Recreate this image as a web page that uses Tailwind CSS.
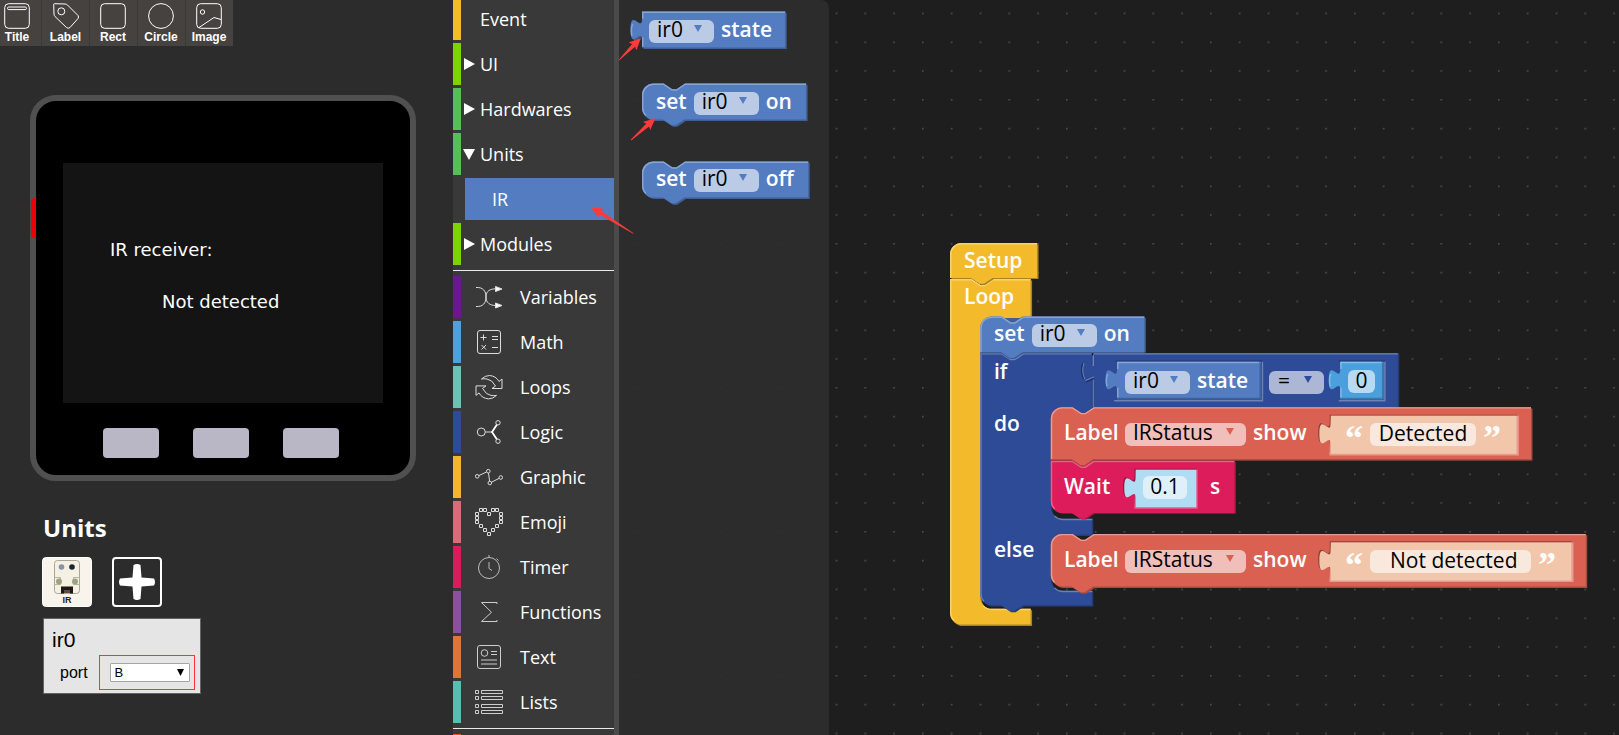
<!DOCTYPE html>
<html lang="en">
<head>
<meta charset="utf-8">
<title>UIFlow</title>
<script src="https://cdn.jsdelivr.net/npm/@tailwindcss/browser@4"></script>
</head>
<body class="relative flex h-screen overflow-hidden bg-[#2c2c2c] font-['Open_Sans',sans-serif] text-white">

<!-- Simulator panel -->
<aside class="w-[453px] shrink-0">
  <div class="flex w-[233px] bg-[#454240] font-['Liberation_Sans',sans-serif] text-xs font-bold leading-4">
    <button class="flex h-[46px] w-[42px] flex-col items-center border-r border-[#3c3a38] pt-[3px] pr-[7px]">
      <svg class="h-[26px] w-[26px]" viewBox="0 0 26 26" fill="none" stroke="#fff"><rect x=".7" y=".7" width="24.6" height="24.6" rx="4"/><rect x="3.5" y="4" width="19" height="2.6" rx="1.3"/></svg>Title</button>
    <button class="flex h-[46px] w-12 flex-col items-center border-r border-[#3c3a38] pt-[3px]">
      <svg class="h-[26px] w-[26px]" viewBox="0 0 26 26" fill="none" stroke="#fff"><path d="M.7 1.5Q.7.7 1.500.7L12 1Q13.500 1 14.500 2L25 12.500Q26 14 25 15.500L17 24.500Q15 26 13.500 24.500L2 13.500Q1 12.500 1 11Z"/><circle cx="8.300" cy="8.300" r="3.500"/></svg>Label</button>
    <button class="flex h-[46px] w-12 flex-col items-center border-r border-[#3c3a38] pt-[3px] pr-px">
      <svg class="h-[26px] w-[26px]" viewBox="0 0 26 26" fill="none" stroke="#fff"><rect x=".7" y=".7" width="24.6" height="24.6" rx="4"/></svg>Rect</button>
    <button class="flex h-[46px] w-12 flex-col items-center border-r border-[#3c3a38] pt-[3px] pr-px">
      <svg class="h-[26px] w-[26px]" viewBox="0 0 26 26" fill="none" stroke="#fff"><circle cx="13" cy="13" r="12.400"/></svg>Circle</button>
    <button class="flex h-[46px] w-[47px] flex-col items-center pt-[3px] pr-px">
      <svg class="h-[26px] w-[26px]" viewBox="0 0 26 26" fill="none" stroke="#fff"><rect x=".7" y=".7" width="24.6" height="24.6" rx="4"/><circle cx="6.500" cy="9" r="2.200"/><path d="M3 24.500L18 14.500L25 16.500"/></svg>Image</button>
  </div>

  <div class="relative mt-[49px] ml-[30px] flex w-[386px] flex-col items-center rounded-[26px] border-[6px] border-[#505050] bg-black pt-[62px] pb-[17px]">
    <div class="absolute top-[97px] -left-[5px] h-10 w-[5px] rounded-l-sm bg-[#ee0008]"></div>
    <div class="h-60 w-80 bg-[#141414] pt-[75px] pl-[47px] font-['DejaVu_Sans',sans-serif] text-lg leading-6">
      <p>IR receiver:</p>
      <p class="mt-7 pl-[52px]">Not detected</p>
    </div>
    <div class="mt-[25px] mr-1 flex gap-[34px]">
      <button aria-label="Button A" class="h-[30px] w-14 rounded bg-[#b9b7c5]"></button>
      <button aria-label="Button B" class="h-[30px] w-14 rounded bg-[#b9b7c5]"></button>
      <button aria-label="Button C" class="h-[30px] w-14 rounded bg-[#b9b7c5]"></button>
    </div>
  </div>

  <h2 class="mt-[31px] ml-[43px] text-2xl leading-8 font-bold">Units</h2>
  <div class="mt-[13px] ml-[42px] flex gap-5">
    <button aria-label="IR unit" class="h-[50px] w-[50px] overflow-hidden rounded">
      <svg viewBox="0 0 50 50"><rect width="50" height="50" rx="4" fill="#fff"/><rect x="1" y="1" width="48" height="48" rx="3" fill="#f8f4ec"/><rect x="12.500" y="3.500" width="25" height="33" rx="3" fill="#f4f0e4" stroke="#aaa69a"/><circle cx="19.500" cy="10" r="2.800" fill="#8496a3"/><circle cx="30" cy="10" r="2.800" fill="#1b2430"/><path d="M12.500 20.500h6v7h-6M37.500 20.500h-6v7h6" fill="none" stroke="#b9b5a5"/><circle cx="17" cy="24.500" r="3" fill="#9ba380"/><circle cx="33" cy="24.500" r="3" fill="#9ba380"/><path d="M19 29.500h12v7h-3v-2h-6v2h-3z" fill="#1f1715"/><rect x="22" y="33" width="6" height="3" fill="#5a4c46"/><text x="25" y="46" text-anchor="middle" font-family="Liberation Sans" font-weight="700" font-size="9" fill="#2a2321">IR</text></svg>
    </button>
    <button aria-label="Add unit" class="flex h-[50px] w-[50px] items-center justify-center rounded border-2 border-white">
      <svg class="h-9 w-9" viewBox="0 0 36 36" fill="#fff"><path d="M14.500 1Q18-1 21.500 1L22.500 13.500L35 14.500Q37 18 35 21.500L22.500 22.500L21.500 35Q18 37 14.500 35L13.500 22.500L1 21.500Q-1 18 1 14.500L13.500 13.500Z"/></svg>
    </button>
  </div>
  <div class="mt-[11px] ml-[43px] w-[158px] border border-[#636363] bg-[#e5e5e5] pt-[9px] pb-[3px] font-['Liberation_Sans',sans-serif] text-black">
    <h3 class="pl-2 text-[21px] leading-6">ir0</h3>
    <div class="mt-[3px] flex items-center pl-4">
      <label for="port" class="text-base leading-6">port</label>
      <div class="ml-[11px] border border-[#ff3333] py-[7px] pr-1 pl-[10px]">
        <div class="relative">
          <select id="port" class="block h-[19px] w-20 appearance-none rounded-[1px] border border-[#a5a5a5] bg-white pl-1 text-[13px] leading-4"><option>B</option></select>
          <svg class="pointer-events-none absolute top-[6px] right-[6px] h-[7px] w-[7px]" viewBox="0 0 7 7"><path d="M0 0h7L3.500 7z"/></svg>
        </div>
      </div>
    </div>
  </div>
</aside>

<!-- Block categories -->
<nav class="w-[166px] shrink-0 overflow-hidden border-r-[5px] border-[#4a4a4a] bg-[#393939] text-lg">
  <div class="-mt-0.5 flex flex-col gap-[3px]">
    <button class="flex h-[42px] items-center border-l-8 border-[#f4bb2d] pl-[19px]">Event</button>
    <button class="flex h-[42px] items-center gap-[5px] border-l-8 border-[#7ed300] pl-[3px]"><svg class="h-3 w-[11px]" viewBox="0 0 11 12" fill="#fff"><path d="M0 0L11 6L0 12z"/></svg>UI</button>
    <button class="flex h-[42px] items-center gap-[5px] border-l-8 border-[#55c05a] pl-[3px]"><svg class="h-3 w-[11px]" viewBox="0 0 11 12" fill="#fff"><path d="M0 0L11 6L0 12z"/></svg>Hardwares</button>
    <button class="flex h-[42px] items-center gap-[5px] border-l-8 border-[#55c05a] pl-0.5"><svg class="h-[11px] w-3" viewBox="0 0 12 11" fill="#fff"><path d="M0 0H12L6 11z"/></svg>Units</button>
    <button class="ml-3 flex h-[42px] items-center bg-[#547dc1] pl-[27px]">IR</button>
    <button class="flex h-[42px] items-center gap-[5px] border-l-8 border-[#7ed300] pl-[3px]"><svg class="h-3 w-[11px]" viewBox="0 0 11 12" fill="#fff"><path d="M0 0L11 6L0 12z"/></svg>Modules</button>
  </div>
  <hr class="mt-[5px] mb-[5px] border-white/90">
  <div class="flex flex-col gap-[3px]">
    <button class="flex h-[42px] items-center gap-[17px] border-l-8 border-[#6a1790] pl-[14px]">
      <svg class="h-7 w-7" viewBox="0 0 28 28" fill="none" stroke="#ddd"><path d="M1 4.500C8 4 11 8 11 14S15 22.500 21 22.500M1 23.500C8 24 11 20 11 14S15 5.800 21 5.800"/><path d="M20.500 3.500L27 6L20.500 8.500zM20.500 20L27 22.500L20.500 25z" fill="#fff"/></svg>Variables</button>
    <button class="flex h-[42px] items-center gap-[17px] border-l-8 border-[#4ea0de] pl-[14px]">
      <svg class="h-7 w-7" viewBox="0 0 28 28" fill="none" stroke="#ddd"><rect x="2.500" y="2.500" width="23" height="23" rx="2.500"/><path d="M5.500 9.500h6M8.500 6.500v6M17 8.500h6M17 11.500h6M6.500 17l4.500 4.500M11 17l-4.500 4.500M17 19.500h6"/></svg>Math</button>
    <button class="flex h-[42px] items-center gap-[17px] border-l-8 border-[#6ac3b4] pl-[14px]">
      <svg class="h-7 w-7" viewBox="0 0 28 28" fill="none" stroke="#ddd"><path d="M6.500 6Q10 2.500 14.500 2.500Q21 3 24 8.500L27 6V15.500H17L20.500 13Q17 6.500 12 6Q9 5.500 6.500 6z"/><path transform="rotate(180 14 14.200)" d="M6.500 6Q10 2.500 14.500 2.500Q21 3 24 8.500L27 6V15.500H17L20.500 13Q17 6.500 12 6Q9 5.500 6.500 6z"/></svg>Loops</button>
    <button class="flex h-[42px] items-center gap-[17px] border-l-8 border-[#2d4b96] pl-[14px]">
      <svg class="h-7 w-7" viewBox="0 0 28 28" fill="none" stroke="#ddd"><circle cx="6.300" cy="14" r="4"/><path d="M10.500 14H17"/><path d="M22 6.500L17 14L22 21.500" stroke="#fff" stroke-width="1.800"/><circle cx="23" cy="4.800" r="2.200"/><circle cx="23" cy="23.200" r="2.200"/></svg>Logic</button>
    <button class="flex h-[42px] items-center gap-[17px] border-l-8 border-[#f5b432] pl-[14px]">
      <svg class="h-7 w-7" viewBox="0 0 28 28" fill="none" stroke="#ddd"><circle cx="2.200" cy="13.300" r="1.800"/><circle cx="13.300" cy="8.200" r="1.800"/><circle cx="14.800" cy="20" r="1.800"/><circle cx="25.800" cy="14.500" r="1.800"/><path d="M4 12.500L11.500 9M13.500 10L14.600 18.200M16.500 19.200L24 15.400"/></svg>Graphic</button>
    <button class="flex h-[42px] items-center gap-[17px] border-l-8 border-[#dd6a7a] pl-[14px]">
      <svg class="h-7 w-7" viewBox="0 0 28 28" fill="none" stroke="#ddd"><path d="M4.500.500h3v3h-3zM8.500.500h3v3h-3zM16.500.500h3v3h-3zM20.500.500h3v3h-3zM12.500 4.500h3v3h-3zM.500 4.500h3v3h-3zM.500 8.500h3v3h-3zM.500 12.500h3v3h-3zM24.500 4.500h3v3h-3zM24.500 8.500h3v3h-3zM24.500 12.500h3v3h-3zM4.500 16.500h3v3h-3zM8.500 20.500h3v3h-3zM12.500 24.500h3v3h-3zM20.500 16.500h3v3h-3zM16.500 20.500h3v3h-3z"/></svg>Emoji</button>
    <button class="flex h-[42px] items-center gap-[17px] border-l-8 border-[#db1c5c] pl-[14px]">
      <svg class="h-7 w-7" viewBox="0 0 28 28" fill="none" stroke="#bbb"><circle cx="14" cy="15" r="10.500"/><path d="M14 2v2.500M21.500 5.500l2 2M14 9v6.500l3 2"/></svg>Timer</button>
    <button class="flex h-[42px] items-center gap-[17px] border-l-8 border-[#8c50a0] pl-[14px]">
      <svg class="h-7 w-7" viewBox="0 0 28 28" fill="none" stroke="#ccc"><path d="M22 6V4.500H6.500L16.500 14.300L6.500 23.500H22V22"/></svg>Functions</button>
    <button class="flex h-[42px] items-center gap-[17px] border-l-8 border-[#e07538] pl-[14px]">
      <svg class="h-7 w-7" viewBox="0 0 28 28" fill="none" stroke="#ccc"><rect x="2.500" y="2.500" width="23" height="23" rx="2.500"/><circle cx="9.500" cy="10" r="3.300"/><path d="M16 8.500h6M16 11.500h6M6 17h16M6 21h16"/></svg>Text</button>
    <button class="flex h-[42px] items-center gap-[17px] border-l-8 border-[#55bfb0] pl-[14px]">
      <svg class="h-7 w-7" viewBox="0 0 28 28" fill="none" stroke="#ccc"><path d="M.500 2.500h3v3h-3zM6.500 2.500h21v3h-21zM.500 8.500h3v3h-3zM6.500 8.500h21v3h-21zM.500 16.500h3v3h-3zM6.500 16.500h21v3h-21zM.500 22.500h3v3h-3zM6.500 22.500h21v3h-21z"/></svg>Lists</button>
  </div>
  <hr class="mt-[5px] mb-[5px] border-white/90">
  <div class="h-[42px] border-l-8 border-[#f0501e]"></div>
</nav>

<!-- Workspace canvas -->
<main class="relative min-w-0 flex-1 overflow-hidden bg-[#1e1e1e] text-[21px] leading-6 font-semibold">
  <svg class="absolute inset-0 h-full w-full">
    <defs><pattern id="dots" x="15" y="12.600" width="28.800" height="28.800" patternUnits="userSpaceOnUse"><rect width="1.600" height="1.600" fill="#505050"/></pattern></defs>
    <rect width="100%" height="100%" fill="url(#dots)"/>
  </svg>

  <!-- Flyout -->
  <section class="absolute inset-y-0 left-0 w-[210px] rounded-tr-lg bg-[#2d2d2d]/90">
    <svg class="absolute inset-0 h-full w-full">
      <g transform="translate(23 11.500) scale(1.44)">
        <path transform="translate(1 1)" fill="#3f5f96" d="M0 0H99.500V25H0V20C0 10-8 28-8 12.500S0 15 0 5z"/>
        <path fill="#547dc1" d="M0 0H99.500V25H0V20C0 10-8 28-8 12.500S0 15 0 5z"/>
        <path fill="none" stroke="#87a4d4" d="M99.500 .500H.500V5M.500 18V24.500M-7 17Q-8 12-6.500 8.500"/>
      </g>
      <g transform="translate(23 83.500) scale(1.44)">
        <path transform="translate(1 1)" fill="#3f5f96" d="M0 8A8 8 0 0 1 8 0H15l6 4h3l6-4H114V25H29.500l-6 4h-3l-6-4H8A8 8 0 0 1 0 17z"/>
        <path fill="#547dc1" d="M0 8A8 8 0 0 1 8 0H15l6 4h3l6-4H114V25H29.500l-6 4h-3l-6-4H8A8 8 0 0 1 0 17z"/>
        <path fill="none" stroke="#87a4d4" d="M2.700 22.300A7.500 7.500 0 0 1 .500 17V8A7.500 7.500 0 0 1 8 .500H15l6 4h3l6-4H114"/>
      </g>
      <g transform="translate(23 161.500) scale(1.44)">
        <path transform="translate(1 1)" fill="#3f5f96" d="M0 8A8 8 0 0 1 8 0H15l6 4h3l6-4H115.500V25H29.500l-6 4h-3l-6-4H8A8 8 0 0 1 0 17z"/>
        <path fill="#547dc1" d="M0 8A8 8 0 0 1 8 0H15l6 4h3l6-4H115.500V25H29.500l-6 4h-3l-6-4H8A8 8 0 0 1 0 17z"/>
        <path fill="none" stroke="#87a4d4" d="M2.700 22.300A7.500 7.500 0 0 1 .500 17V8A7.500 7.500 0 0 1 8 .500H15l6 4h3l6-4H115.500"/>
      </g>
    </svg>
    <div class="absolute top-[17px] left-[30px] flex items-baseline gap-[7px]">
      <span class="relative"><select aria-label="Unit" class="h-[23px] w-[65px] appearance-none rounded-md bg-[#bbcbe6] pb-[5px] pl-2 leading-[18px] font-normal text-black"><option>ir0</option></select><svg class="pointer-events-none absolute top-2 right-3 h-[7px] w-2" viewBox="0 0 8 7" fill="#547dc1"><path d="M0 0h8L4 7z"/></svg></span>
      <span>state</span>
    </div>
    <div class="absolute top-[89px] left-[37px] flex items-baseline gap-[7px]">
      <span>set</span>
      <span class="relative"><select aria-label="Unit" class="h-[23px] w-[65px] appearance-none rounded-md bg-[#bbcbe6] pb-[5px] pl-2 leading-[18px] font-normal text-black"><option>ir0</option></select><svg class="pointer-events-none absolute top-2 right-3 h-[7px] w-2" viewBox="0 0 8 7" fill="#547dc1"><path d="M0 0h8L4 7z"/></svg></span>
      <span>on</span>
    </div>
    <div class="absolute top-[166px] left-[37px] flex items-baseline gap-[7px]">
      <span>set</span>
      <span class="relative"><select aria-label="Unit" class="h-[23px] w-[65px] appearance-none rounded-md bg-[#bbcbe6] pb-[5px] pl-2 leading-[18px] font-normal text-black"><option>ir0</option></select><svg class="pointer-events-none absolute top-2 right-3 h-[7px] w-2" viewBox="0 0 8 7" fill="#547dc1"><path d="M0 0h8L4 7z"/></svg></span>
      <span>off</span>
    </div>
  </section>

  <!-- Program: block shapes are drawn at 1.44 zoom -->
  <section class="absolute top-[243px] left-[331px] h-[390px] w-[650px]">
    <svg class="absolute inset-0 h-full w-full overflow-visible">
      <g transform="scale(1.44)">
        <!-- Loop -->
        <g transform="translate(0 25)">
          <path transform="translate(1 1)" fill="#a98322" d="M0 0H15l6 4h3l6-4H56V26H50l-6 4h-3l-6-4H29A8 8 0 0 0 21 34V221A8 8 0 0 0 29 229H56V240H8A8 8 0 0 1 0 232z"/>
          <path fill="#f3bb2b" d="M0 0H15l6 4h3l6-4H56V26H50l-6 4h-3l-6-4H29A8 8 0 0 0 21 34V221A8 8 0 0 0 29 229H56V240H8A8 8 0 0 1 0 232z"/>
          <path fill="none" stroke="#f8d373" d="M2.500 237A7.500 7.500 0 0 1 .500 232V.500H15l6 4h3l6-4H56M23 227A8 8 0 0 0 29 229.500H56"/>
        </g>
        <!-- Setup -->
        <path transform="translate(1 1)" fill="#a98322" d="M0 8A8 8 0 0 1 8 0H60.500V24H29.500l-6 4h-3l-6-4H0z"/>
        <path fill="#f3bb2b" d="M0 8A8 8 0 0 1 8 0H60.500V24.300H29.500l-6 4h-3l-6-4H0z"/>
        <path fill="none" stroke="#f8d373" d="M.500 24V8A7.500 7.500 0 0 1 8 .500H60.500"/>
        <!-- If -->
        <g transform="translate(21 76.500)">
          <path transform="translate(1 1)" fill="#243c78" d="M0 0H77.500V38H78l-6 4h-3l-6-4H57A8 8 0 0 0 49 46V107A8 8 0 0 0 57 115H77.500V126H57A8 8 0 0 0 49 134V157A8 8 0 0 0 57 165H77.500V175H29.500l-6 4h-3l-6-4H8A8 8 0 0 1 0 167z"/>
          <path fill="#2d4b96" d="M0 0H77.500V38l-6 4h-3l-6-4H57A8 8 0 0 0 49 46V107A8 8 0 0 0 57 115H77.500V126H57A8 8 0 0 0 49 134V157A8 8 0 0 0 57 165H77.500V175H29.500l-6 4h-3l-6-4H8A8 8 0 0 1 0 167z"/>
          <path fill="none" stroke="#6c81b6" d="M2.500 172.500A7.500 7.500 0 0 1 .500 167V.500H15l6 4h3l6-4H78M51.500 113A8 8 0 0 0 57 115.500H78M51.500 163A8 8 0 0 0 57 165.500H78"/>
        </g>
        <!-- Set on -->
        <g transform="translate(21 51)">
          <path transform="translate(1 1)" fill="#3f5f96" d="M0 8A8 8 0 0 1 8 0H114V24H29.500l-6 4h-3l-6-4H0z"/>
          <path fill="#547dc1" d="M0 8A8 8 0 0 1 8 0H15l6 4h3l6-4H114V25H29.500l-6 4h-3l-6-4H0z"/>
          <path fill="none" stroke="#87a4d4" d="M.500 25V8A7.500 7.500 0 0 1 8 .500H15l6 4h3l6-4H114"/>
          <path fill="none" stroke="#3f5f96" stroke-width=".7" d="M0 25.200H14.500l6 4h3l6-4H114"/>
        </g>
        <!-- Equals -->
        <g transform="translate(100 76.500)">
          <path fill="#243c78" d="M0 0H212V38.500H0z"/>
          <path fill="#2d4b96" d="M0 0H211V37.500H0V20C0 10-8 28-8 12.500S0 15 0 5z"/>
          <path fill="none" stroke="#6c81b6" d="M211 .500H-.500V9"/>
          <path fill="none" stroke="#6c81b6" stroke-width=".8" d="M-.500 17V37.500M-6.500 18Q-9 12-7 7M-6 19L0 16.500"/>
          <path fill="none" stroke="#1b2f60" stroke-width=".8" d="M-7.300 18Q-9.800 12-7.800 7M-5.500 20L0 17.500"/>
          <rect x="-1.500" y="0" width="1" height="1.500" fill="#0b1226"/>
        </g>
        <!-- ir0 state -->
        <g transform="translate(116 82.500)">
          <path fill="#243c78" d="M-1-1H101V0H-1z"/>
          <path fill="#547dc1" d="M0 0H100V26H0V20C0 10-8 28-8 12.500S0 15 0 5z"/>
          <path fill="none" stroke="#87a4d4" d="M98.500 .500H.500V5M.500 18V25M-7 17Q-8 12-6.500 8.500"/>
          <path fill="none" stroke="#3f5f96" d="M99.500 1V25.500H0"/>
          <path fill="none" stroke="#6c81b6" d="M101 0V27H-2"/>
        </g>
        <!-- number 0 -->
        <g transform="translate(271 82.500)">
          <path fill="#243c78" d="M-1-1H31V0H-1z"/>
          <path fill="#4c9fdd" d="M0 0H30V26H0V20C0 10-8 28-8 12.500S0 15 0 5z"/>
          <path fill="none" stroke="#82bce7" d="M28.500 .500H.500V5M.500 18V25M-7 17Q-8 12-6.500 8.500"/>
          <path fill="none" stroke="#3b79a8" d="M29.500 1V25.500H0"/>
          <path fill="none" stroke="#6c81b6" d="M31 0V27H-1"/>
        </g>
        <!-- Wait -->
        <g transform="translate(70 151)">
          <path transform="translate(1 1)" fill="#a81746" d="M0 0H127.500V36H29.500l-6 4h-3l-6-4H8A8 8 0 0 1 0 28z"/>
          <path fill="#dc1c5b" d="M0 0H127.500V36.500H29.500l-6 4h-3l-6-4H8A8 8 0 0 1 0 28.500z"/>
          <path fill="none" stroke="#e6608c" d="M2.700 33.800A7.500 7.500 0 0 1 .500 28.500V.700H15l6 4h3l6-4H127.500"/>
        </g>
        <!-- Label show, detected -->
        <g transform="translate(70 114)">
          <path transform="translate(1 1)" fill="#a84b40" d="M30 0H333.500V36H0z"/>
          <path fill="#da6152" d="M0 8A8 8 0 0 1 8 0H15l6 4h3l6-4H333.500V36.500H29.500l-6 4h-3l-6-4H0z"/>
          <path fill="none" stroke="#e79b92" d="M.500 36.500V8A7.500 7.500 0 0 1 8 .500H15l6 4h3l6-4H333.500"/>
          <path fill="none" stroke="#a84b40" stroke-width=".7" d="M0 36.600H14.500l6 4h3l6-4H333.500"/>
        </g>
        <!-- Label show, not detected -->
        <g transform="translate(70 202)">
          <path transform="translate(1 1)" fill="#a84b40" d="M30 0H371.500V36.500H29.500l-6 4h-3l-6-4H8A8 8 0 0 1 0 28z"/>
          <path fill="#da6152" d="M0 8A8 8 0 0 1 8 0H15l6 4h3l6-4H371.500V36.500H29.500l-6 4h-3l-6-4H8A8 8 0 0 1 0 28.500z"/>
          <path fill="none" stroke="#e79b92" d="M2.700 33.800A7.500 7.500 0 0 1 .500 28.500V8A7.500 7.500 0 0 1 8 .500H15l6 4h3l6-4H371.500"/>
        </g>
        <!-- text and number inputs -->
        <g transform="translate(264.500 120)">
          <path transform="translate(-.8 -.8)" fill="#8f4037" d="M0 0H130V26H0V20C0 10-8 28-8 12.500S0 15 0 5z"/>
          <path fill="#e79b92" d="M0 0H130.500V27.500H-1V26z"/>
          <path fill="#f2c6ab" d="M0 0H129V26.300H0V20C0 10-8 28-8 12.500S0 15 0 5z"/>
        </g>
        <g transform="translate(264.500 208)">
          <path transform="translate(-.8 -.8)" fill="#8f4037" d="M0 0H168V26H0V20C0 10-8 28-8 12.500S0 15 0 5z"/>
          <path fill="#e79b92" d="M0 0H168.500V27.500H-1V26z"/>
          <path fill="#f2c6ab" d="M0 0H167V26.300H0V20C0 10-8 28-8 12.500S0 15 0 5z"/>
        </g>
        <g transform="translate(129 157.500)">
          <path transform="translate(-.8 -.8)" fill="#8c1440" d="M0 0H43V26H0V20C0 10-8 28-8 12.500S0 15 0 5z"/>
          <path fill="#e6608c" d="M0 0H43V27H-1V26z"/>
          <path fill="#b0dcf4" d="M0 0H42V26H0V20C0 10-8 28-8 12.500S0 15 0 5z"/>
        </g>
      </g>
    </svg>

    <span class="absolute top-[5px] left-[14px]">Setup</span>
    <span class="absolute top-[41px] left-[14px]">Loop</span>
    <div class="absolute top-[78px] left-11 flex items-baseline gap-[7px]">
      <span>set</span>
      <span class="relative"><select aria-label="Unit" class="h-[23px] w-[65px] appearance-none rounded-md bg-[#bbcbe6] pb-[5px] pl-2 leading-[18px] font-normal text-black"><option>ir0</option></select><svg class="pointer-events-none absolute top-2 right-3 h-[7px] w-2" viewBox="0 0 8 7" fill="#547dc1"><path d="M0 0h8L4 7z"/></svg></span>
      <span>on</span>
    </div>
    <span class="absolute top-[116px] left-11">if</span>
    <div class="absolute top-[125px] left-[175px] flex items-baseline gap-[7px]">
      <span class="relative"><select aria-label="Unit" class="h-[23px] w-[65px] appearance-none rounded-md bg-[#bbcbe6] pb-[5px] pl-2 leading-[18px] font-normal text-black"><option>ir0</option></select><svg class="pointer-events-none absolute top-2 right-3 h-[7px] w-2" viewBox="0 0 8 7" fill="#547dc1"><path d="M0 0h8L4 7z"/></svg></span>
      <span class="w-[65px]">state</span>
      <span class="relative"><select aria-label="Comparison" class="h-[23px] w-[55px] appearance-none rounded-md bg-[#abb7d5] pb-[5px] pl-[9px] leading-[18px] font-normal text-black"><option>=</option></select><svg class="pointer-events-none absolute top-2 right-3 h-[7px] w-2" viewBox="0 0 8 7" fill="#2d4b96"><path d="M0 0h8L4 7z"/></svg></span>
      <input aria-label="Number" value="0" class="ml-[17px] h-[23px] w-[27px] rounded-md bg-[#b7d9f1] pb-[3px] text-center leading-5 font-normal text-black">
    </div>
    <span class="absolute top-[168px] left-11">do</span>
    <div class="absolute top-[177px] left-[114px] flex items-baseline gap-[7px]">
      <span class="w-[54px]">Label</span>
      <span class="relative"><select aria-label="Label name" class="h-[23px] w-[121px] appearance-none rounded-md bg-[#f0bfba] pb-[5px] pl-2 leading-[18px] font-normal text-black"><option>IRStatus</option></select><svg class="pointer-events-none absolute top-2 right-3 h-[7px] w-2" viewBox="0 0 8 7" fill="#da6152"><path d="M0 0h8L4 7z"/></svg></span>
      <span>show</span>
    </div>
    <div class="absolute top-[180px] left-[395px] flex gap-[7px]">
      <span class="pt-[3px] font-['Liberation_Serif',serif] text-4xl leading-6 font-bold">“</span>
      <input aria-label="Text" value="Detected" class="h-[23px] w-[106px] rounded-md bg-[#f9e8de] pb-[3px] text-center leading-5 font-normal text-black">
      <span class="pt-[3px] font-['Liberation_Serif',serif] text-4xl leading-6 font-bold">”</span>
    </div>
    <div class="absolute top-[231px] left-[114px] flex items-baseline">
      <span class="w-[79px]">Wait</span>
      <input aria-label="Seconds" value="0.1" class="h-[23px] w-11 rounded-md bg-[#dff0fb] pb-[3px] text-center leading-5 font-normal text-black">
      <span class="ml-[23px]">s</span>
    </div>
    <span class="absolute top-[294px] left-11">else</span>
    <div class="absolute top-[304px] left-[114px] flex items-baseline gap-[7px]">
      <span class="w-[54px]">Label</span>
      <span class="relative"><select aria-label="Label name" class="h-[23px] w-[121px] appearance-none rounded-md bg-[#f0bfba] pb-[5px] pl-2 leading-[18px] font-normal text-black"><option>IRStatus</option></select><svg class="pointer-events-none absolute top-2 right-3 h-[7px] w-2" viewBox="0 0 8 7" fill="#da6152"><path d="M0 0h8L4 7z"/></svg></span>
      <span>show</span>
    </div>
    <div class="absolute top-[307px] left-[395px] flex gap-[7px]">
      <span class="pt-[3px] font-['Liberation_Serif',serif] text-4xl leading-6 font-bold">“</span>
      <input aria-label="Text" value="Not detected" class="h-[23px] w-[161px] rounded-md bg-[#f9e8de] pb-[3px] pl-5 leading-5 font-normal text-black">
      <span class="pt-[3px] font-['Liberation_Serif',serif] text-4xl leading-6 font-bold">”</span>
    </div>
  </section>
</main>

<!-- Callout arrows -->
<svg class="pointer-events-none absolute inset-0 h-full w-full" fill="#ff3a3a">
  <path transform="translate(641 38) rotate(-45)" d="M0 0L-12-5.500L-10.500-2L-31-.400V.400L-10.500 2L-12 5.500z"/>
  <path transform="translate(655.500 118) rotate(-42)" d="M0 0L-12-5.500L-10.500-2L-33-.400V.400L-10.500 2L-12 5.500z"/>
  <path transform="translate(591 207) rotate(212)" d="M0 0L-12-5.500L-10.500-2L-50-.400V.400L-10.500 2L-12 5.500z"/>
</svg>
</body>
</html>
